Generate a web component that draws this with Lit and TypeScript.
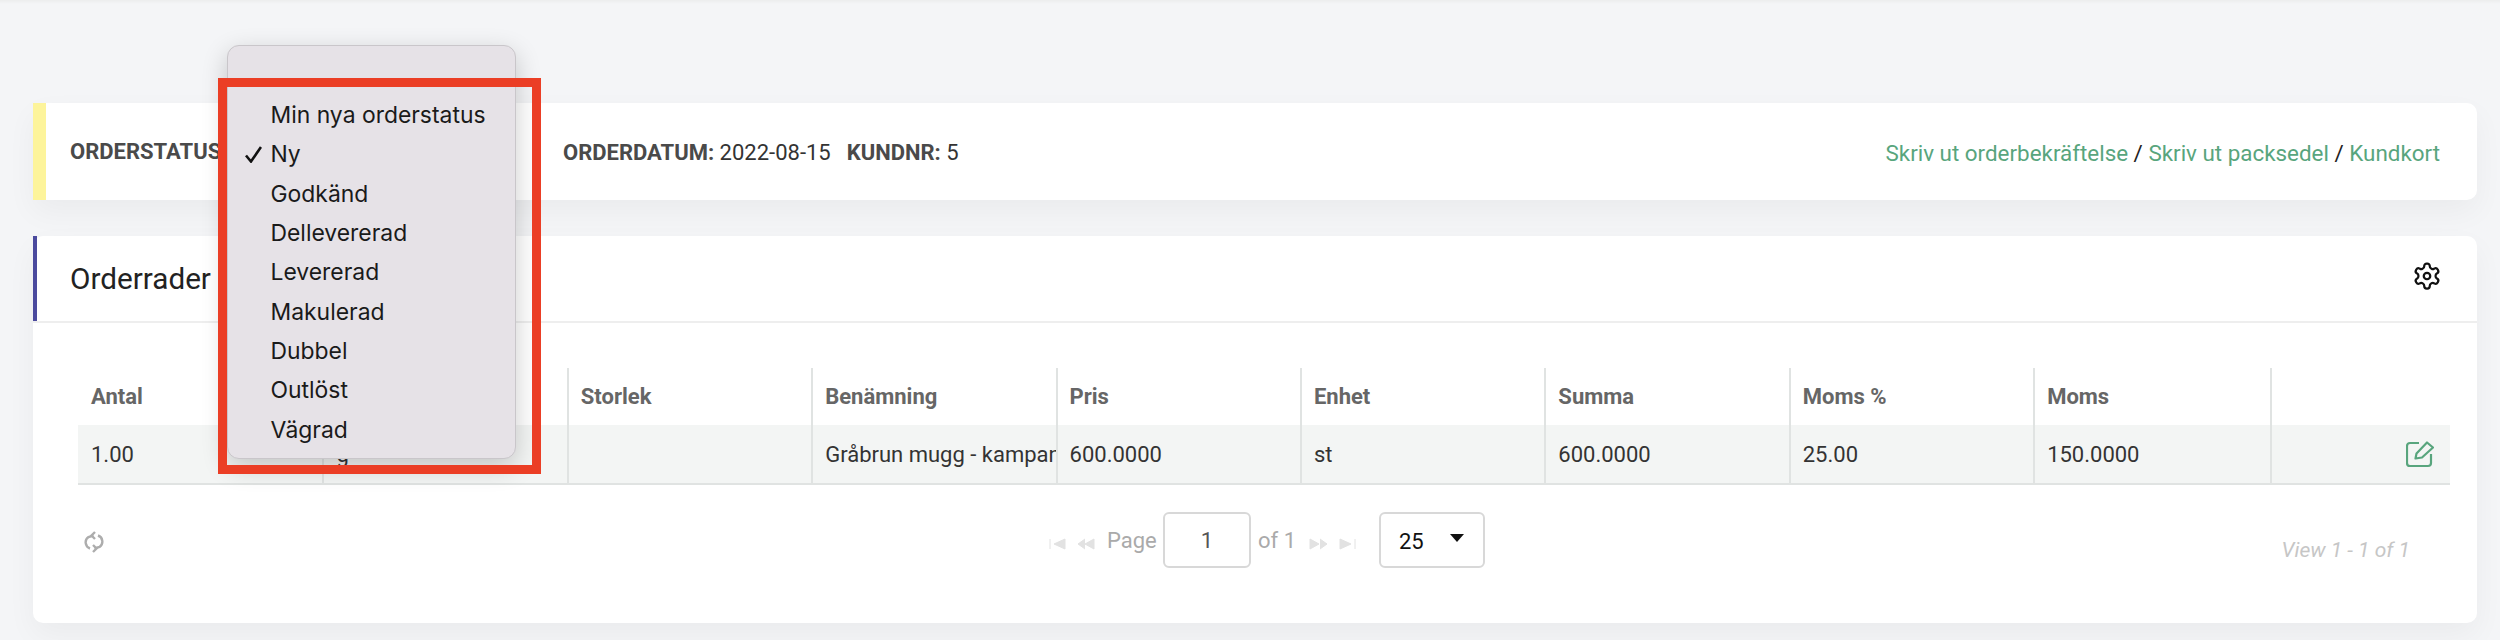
import { LitElement, css, html, svg } from 'lit'
import { customElement } from 'lit/decorators.js'

const STATUSES = ['Min nya orderstatus', 'Ny', 'Godkänd', 'Dellevererad', 'Levererad', 'Makulerad', 'Dubbel', 'Outlöst', 'Vägrad']
const COLUMNS = ['Antal', '', 'Storlek', 'Benämning', 'Pris', 'Enhet', 'Summa', 'Moms %', 'Moms', '']
const ROW = ['1.00', 'g', '', 'Gråbrun mugg - kampanj', '600.0000', 'st', '600.0000', '25.00', '150.0000']

const gear = svg`<path d="M12.22 2h-.44a2 2 0 0 0-2 2v.18a2 2 0 0 1-1 1.73l-.43.25a2 2 0 0 1-2 0l-.15-.08a2 2 0 0 0-2.73.73l-.22.38a2 2 0 0 0 .73 2.73l.15.1a2 2 0 0 1 1 1.72v.51a2 2 0 0 1-1 1.74l-.15.09a2 2 0 0 0-.73 2.73l.22.38a2 2 0 0 0 2.73.73l.15-.08a2 2 0 0 1 2 0l.43.25a2 2 0 0 1 1 1.73V20a2 2 0 0 0 2 2h.44a2 2 0 0 0 2-2v-.18a2 2 0 0 1 1-1.73l.43-.25a2 2 0 0 1 2 0l.15.08a2 2 0 0 0 2.73-.73l.22-.39a2 2 0 0 0-.73-2.73l-.15-.08a2 2 0 0 1-1-1.74v-.5a2 2 0 0 1 1-1.74l.15-.09a2 2 0 0 0 .73-2.73l-.22-.38a2 2 0 0 0-2.73-.73l-.15.08a2 2 0 0 1-2 0l-.43-.25a2 2 0 0 1-1-1.73V4a2 2 0 0 0-2-2z"/><circle cx="12" cy="12" r="2.6"/>`

@customElement('app-root')
export class AppRoot extends LitElement {
   static styles = css`
      :host {
         display: block;
         position: relative;
         height: 640px;
         overflow: hidden;
         background: #f4f5f7;
         font-family: Roboto, sans-serif;
      }

      .topbar {
         height: 4px;
         background: linear-gradient(#eceded, #f4f5f7);
      }

      .page {
         display: flex;
         flex-direction: column;
         gap: 36px;
         padding: 99px 23px 0 33px;
      }

      .card {
         background: #fff;
         box-shadow: 0 12px 30px rgba(0, 0, 0, 0.045);
         border-radius: 0 10px 10px 0;
      }

      /* order info */
      .info {
         display: flex;
         align-items: center;
         height: 97px;
         box-sizing: border-box;
         border-left: 13px solid #fdf49b;
         padding: 2px 37px 0 24px;
         font-size: 22px;
         color: #333;
      }

      .info b {
         font-weight: 700;
         color: #4a4a4a;
      }

      .status {
         width: 493px;
         margin-top: -2px;
      }

      .kund {
         margin-left: 16px;
      }

      .links {
         margin-left: auto;
         font-size: 22.4px;
         color: #222;
      }

      .links a {
         color: #58a57d;
      }

      /* order rows */
      .rows {
         height: 387px;
         border-radius: 10px;
      }

      .head {
         display: flex;
         align-items: center;
         justify-content: space-between;
         height: 85px;
         box-sizing: border-box;
         border-left: 4px solid #4b4a9e;
         padding: 0 35px 0 33px;
         font-size: 29.7px;
         color: #222;
      }

      .gear {
         width: 30px;
         height: 30px;
         margin-bottom: 5px;
         fill: none;
         stroke: #111;
         stroke-width: 1.8;
      }

      .body {
         border-top: 2px solid #eeeeee;
         padding: 45px 27px 0 45px;
      }

      .grid {
         display: grid;
         grid-template-columns: repeat(8, 244.4px) 237px 1fr;
      }

      .cell {
         display: flex;
         align-items: center;
         box-sizing: border-box;
         padding-left: 13px;
         white-space: nowrap;
         overflow: hidden;
         font-size: 22px;
      }

      .cell:not(:nth-child(10n + 1)) {
         border-left: 2px solid #e0e3e2;
         padding-left: 12px;
      }

      .th {
         height: 57px;
         font-weight: 700;
         color: #666;
      }

      .td {
         height: 60px;
         background: #f3f5f4;
         border-bottom: 2px solid #e0e3e2;
         color: #333;
      }

      .edit {
         justify-content: flex-end;
         padding-right: 16px;
      }

      .edit svg {
         width: 28px;
         height: 28px;
         fill: none;
         stroke: #58a57d;
         stroke-width: 2.2;
         stroke-linejoin: round;
      }

      /* pager */
      .pager {
         position: relative;
         display: flex;
         align-items: center;
         height: 56px;
         margin-top: 27px;
         padding-left: 971px;
         font-size: 22px;
         color: #aaa;
      }

      .refresh {
         position: absolute;
         left: 6px;
         top: 19px;
         width: 20px;
         height: 22px;
         fill: none;
         stroke: #adadad;
         stroke-width: 2.4;
      }

      .pgbtn {
         height: 14px;
         fill: #e2e2e2;
         stroke: #e2e2e2;
         margin-top: 8px;
      }

      .pgbtn.end {
         width: 17px;
      }

      .pgbtn.step {
         width: 20px;
      }

      .label {
         width: 49px;
         margin: 0 7px 0 12px;
      }

      .of {
         width: 36px;
         margin: 0 15px 0 7px;
         white-space: nowrap;
      }

      .box {
         display: flex;
         align-items: center;
         box-sizing: border-box;
         height: 56px;
         border: 2px solid #d8d8d8;
         border-radius: 6px;
         background: #fff;
      }

      .pageno {
         justify-content: center;
         width: 88px;
         color: #555;
      }

      .size {
         justify-content: space-between;
         width: 106px;
         padding: 2px 19px 0 18px;
         margin-left: 23px;
         color: #111;
      }

      .size svg {
         width: 14px;
         height: 8px;
         fill: #111;
         margin-top: -6px;
      }

      .total {
         position: absolute;
         right: 40px;
         top: 26px;
         font-size: 21px;
         font-style: italic;
         color: #c6c6c6;
      }

      /* native status menu + annotation on top */
      .menu {
         position: absolute;
         left: 227px;
         top: 45px;
         width: 289px;
         height: 414px;
         box-sizing: border-box;
         padding-top: 50px;
         background: #e6e2e7;
         border: 1px solid #c9c6ca;
         border-radius: 12px;
         box-shadow: 0 8px 26px rgba(0, 0, 0, 0.2);
         font-family: Inter, sans-serif;
         font-size: 22.9px;
         color: #1a1a1a;
      }

      .menu div {
         position: relative;
         height: 39.35px;
         line-height: 39.35px;
         padding-left: 42.5px;
      }

      .check {
         position: absolute;
         left: 17px;
         top: 11px;
         width: 17px;
         height: 17px;
         fill: none;
         stroke: #111;
         stroke-width: 2.6;
      }

      .mark {
         position: absolute;
         left: 218px;
         top: 78px;
         width: 323px;
         height: 396px;
         box-sizing: border-box;
         border: 9px solid #eb3e25;
      }
   `

   pagerIcon(kind: string, d: string) {
      return html`<svg class="pgbtn ${kind}" viewBox="0 0 ${kind === 'end' ? 17 : 20} 14">${svg`<path d=${d}/>`}</svg>`
   }

   render() {
      return html`
         <div class="topbar"></div>
         <div class="page">
            <section class="card info">
               <span class="status"><b>ORDERSTATUS:</b></span>
               <span><b>ORDERDATUM:</b> 2022-08-15</span>
               <span class="kund"><b>KUNDNR:</b> 5</span>
               <span class="links">
                  <a>Skriv ut orderbekräftelse</a> / <a>Skriv ut packsedel</a> / <a>Kundkort</a>
               </span>
            </section>
            <section class="card rows">
               <div class="head">
                  <span>Orderrader</span>
                  <svg class="gear" viewBox="0 0 24 24">${gear}</svg>
               </div>
               <div class="body">
                  <div class="grid">
                     ${COLUMNS.map(c => html`<div class="cell th">${c}</div>`)}
                     ${ROW.map(c => html`<div class="cell td">${c}</div>`)}
                     <div class="cell td edit">
                        <svg viewBox="0 0 28 28">
                           <path d="M13 3H4a3 3 0 0 0-3 3v17a3 3 0 0 0 3 3h18a3 3 0 0 0 3-3v-9"/>
                           <path d="M9.5 18.500l1-5L21 2.500l6 5L16 17.500z"/>
                        </svg>
                     </div>
                  </div>
                  <div class="pager">
                     <svg class="refresh" viewBox="0 0 20 22">
                        <path d="M6 17.500a6.500 6.500 0 0 1-1.500-11.500l5-1.500"/>
                        <path d="M14 4.500a6.500 6.500 0 0 1 1.500 11.500l-5 1.500"/>
                        <path d="M11 1L7.500 4.500 11 8M9 14l3.500 3.500L9 21"/>
                     </svg>
                     ${this.pagerIcon('end', 'M1 2v10M16 2v10L5 7z')}
                     <span style="width:9px"></span>
                     ${this.pagerIcon('step', 'M10 2 3 7l7 5M19 2v10L10 7z')}
                     <span class="label">Page</span>
                     <span class="box pageno">1</span>
                     <span class="of">of 1</span>
                     ${this.pagerIcon('step', 'M1 2v10l9-5zM11 2l7 5-7 5')}
                     <span style="width:10px"></span>
                     ${this.pagerIcon('end', 'M1 2v10l11-5zM16 2v10')}
                     <span class="box size">25
                        <svg viewBox="0 0 14 8"><path d="M0 0h14L7 8z"/></svg>
                     </span>
                     <span class="total">View 1 - 1 of 1</span>
                  </div>
               </div>
            </section>
         </div>
         <div class="menu">
            ${STATUSES.map(s => html`<div>
               ${s === 'Ny' ? html`<svg class="check" viewBox="0 0 17 17"><path d="M1 9.500l5 6L16 1"/></svg>` : ''}
               ${s}
            </div>`)}
         </div>
         <div class="mark"></div>
      `
   }
}
